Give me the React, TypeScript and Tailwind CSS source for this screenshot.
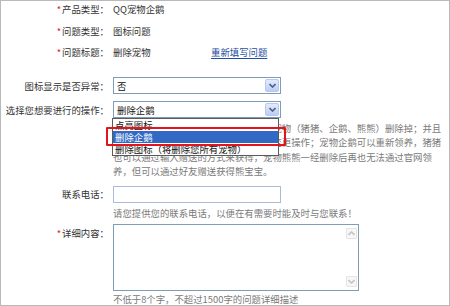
import React from 'react'

const font = { fontFamily: '"Noto Sans CJK SC", "Noto Sans", sans-serif' }

const Star = () => <span className="text-[#e2262d] mr-[1px]">*</span>

const Chevron: React.FC<{ up?: boolean; color?: string }> = ({ up, color = '#4d6185' }) => (
  <svg width="7" height="5" viewBox="0 0 7 5">
    <path
      d={up ? 'M0.5 4 L3.5 1 L6.5 4' : 'M0.5 1 L3.5 4 L6.5 1'}
      fill="none"
      stroke={color}
      strokeWidth="1.6"
    />
  </svg>
)

const SelectBox: React.FC<{ value: string }> = ({ value }) => (
  <div className="w-[168px] h-[17px] border border-[#7f9db9] bg-white flex items-center pl-[3px] pr-[1px]">
    <span className="flex-1 text-[#111]">{value}</span>
    <div className="w-[14px] h-[13px] rounded-[2px] border border-[#b8c9ee] bg-gradient-to-b from-[#e2ebfd] to-[#bccdf5] flex items-center justify-center">
      <Chevron />
    </div>
  </div>
)

const Row: React.FC<{ label: React.ReactNode; className?: string; children?: React.ReactNode }> = ({
  label,
  className = '',
  children,
}) => (
  <div className={`flex items-center ${className}`}>
    <div className="w-[108px] text-right whitespace-nowrap">{label}</div>
    <div className="ml-[4px] flex items-center">{children}</div>
  </div>
)

const ScrollArrow: React.FC<{ up?: boolean }> = ({ up }) => (
  <div className="w-[11px] h-[11px] border border-[#e4e4e4] bg-[#f7f7f7] rounded-[1px] flex items-center justify-center">
    <Chevron up={up} color="#c4c4c4" />
  </div>
)

export default function App() {
  return (
    <div
      className="relative w-[450px] h-[306px] overflow-hidden bg-white border border-[#b9b9b9] text-[9.4px] leading-[14px] text-[#333]"
      style={font}
    >
      {/* Product info */}
      <Row className="h-[16px]" label={<><Star />产品类型：</>}>
        QQ宠物企鹅
      </Row>
      <Row className="h-[16px] mt-[6px]" label={<><Star />问题类型：</>}>
        图标问题
      </Row>
      <Row className="h-[16px] mt-[5px]" label={<><Star />问题标题：</>}>
        <span className="w-[98px]">删除宠物</span>
        <a className="text-[#1f4fa0] underline underline-offset-2">重新填写问题</a>
      </Row>

      {/* Selects */}
      <Row className="h-[17px] mt-[17px]" label="图标显示是否异常：">
        <SelectBox value="否" />
      </Row>
      <Row className="h-[17px] mt-[7px]" label="选择您想要进行的操作：">
        <SelectBox value="删除企鹅" />
      </Row>

      {/* Description */}
      <div className="ml-[112px] mt-[3px] leading-[14.4px] text-[#7a7a7a] whitespace-nowrap">
        <div>删除图标后，系统将会把您所有领养的宠物（猪猪、企鹅、熊熊）删除掉；并且</div>
        <div>删除后将不能再恢复，请您慎重进行此变更操作；宠物企鹅可以重新领养，猪猪</div>
        <div>也可以通过输入赠送的方式来获得，宠物熊熊一经删除后再也无法通过官网领</div>
        <div>养，但可以通过好友赠送获得熊宝宝。</div>
      </div>

      {/* Phone */}
      <Row className="h-[17px] mt-[7px]" label="联系电话：">
        <div className="w-[168px] h-[17px] border border-[#a9bed6] bg-white" />
      </Row>
      <div className="ml-[112px] mt-[3px] text-[#7a7a7a]">请您提供您的联系电话，以便在有需要时能及时与您联系！</div>

      {/* Detail */}
      <div className="flex mt-[4px]">
        <div className="w-[108px] text-right whitespace-nowrap pt-[2px]">
          <Star />详细内容：
        </div>
        <div className="ml-[4px] w-[246px] h-[67px] border border-[#7f9db9] bg-white flex justify-end pr-[1px] py-[3px]">
          <div className="w-[11px] flex flex-col justify-between">
            <ScrollArrow up />
            <ScrollArrow />
          </div>
        </div>
      </div>
      <div className="ml-[112px] mt-[1px] text-[#7a7a7a]">不低于8个字，不超过1500字的问题详细描述</div>

      {/* Open dropdown list */}
      <div className="absolute left-[111px] top-[117px] w-[167px] border border-[#5a5a5a] bg-white text-[#111]">
        <div className="h-[12px] leading-[12px] pl-[2px]">点亮图标</div>
        <div className="h-[12px] leading-[12px] pl-[2px] bg-[#316ac5] text-white">删除企鹅</div>
        <div className="h-[12px] leading-[12px] pl-[2px]">删除图标（将删除您所有宠物）</div>
      </div>
      <div className="absolute left-[105px] top-[126px] w-[180px] h-[19px] border-2 border-[#e3141c] rounded-[1px]" />
    </div>
  )
}
